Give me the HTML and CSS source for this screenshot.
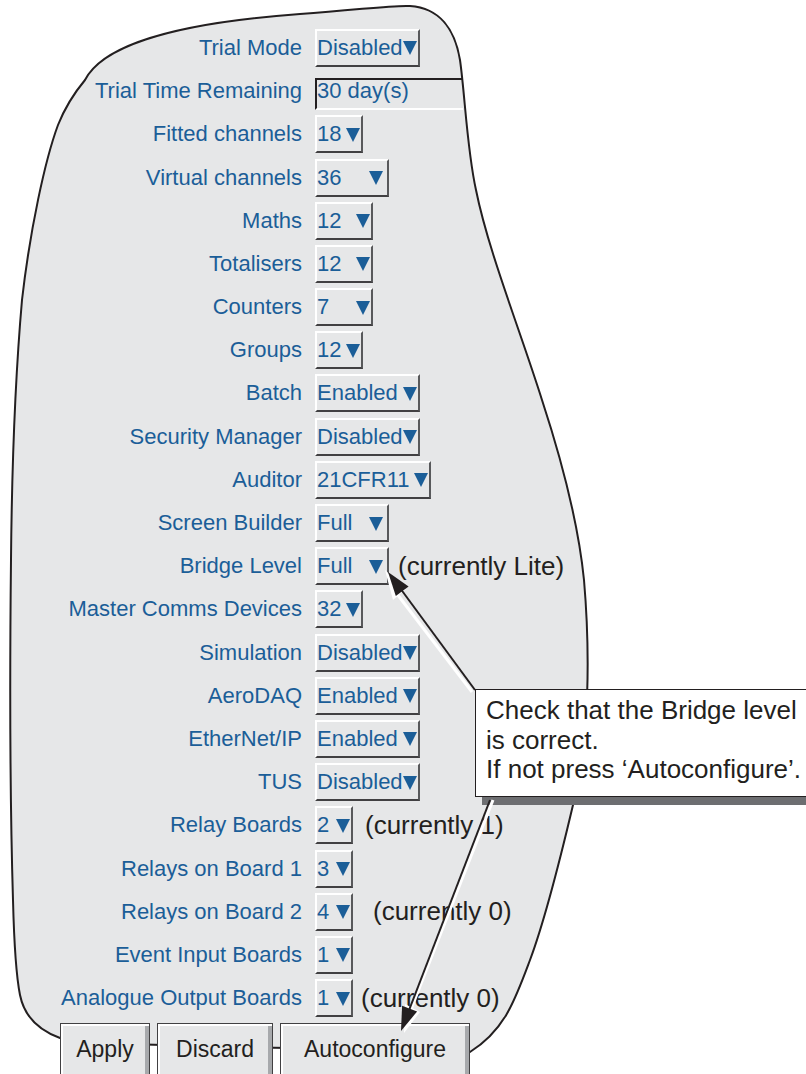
FILE: index.html
```html
<!DOCTYPE html>
<html lang="en">
<head>
    <meta charset="UTF-8">
    <meta name="viewport" content="width=device-width, initial-scale=1.0">
    <title>Options</title>
    <link rel="stylesheet" href="styles.css">
</head>
<body>
<div class="screen">

    <!-- panel outline, hand-drawn shape -->
    <svg class="outline" width="806" height="1074" viewBox="0 0 806 1074">
        <path d="M85,80 C100,50 160,24 300,14 C360,10 390,5 410,6 C440,8 455,30 460,60
                 C465,95 467,150 476,190 C488,250 520,330 542,400 C560,455 578,520 584,580
                 C590,650 590,740 573,805 C560,860 545,920 530,960 C515,1000 505,1030 470,1052
                 C350,1049 200,1047 100,1043 C80,1042 70,1040 60,1038
                 C38,1030 24,1015 20,995 C16,975 14,940 13,900
                 C10,800 10,650 11,560 C12,450 15,380 22,300 C30,230 45,160 58,125 C66,105 75,92 85,80 Z"
              fill="#e6e7e8" stroke="#231f20" stroke-width="2"/>
    </svg>

    <div class="form">
        <div class="row"><span class="label">Trial Mode</span><span class="pick w105">Disabled<i class="tri"></i></span></div>
        <div class="row"><span class="label">Trial Time Remaining</span><span class="field">30 day(s)</span></div>
        <div class="row"><span class="label">Fitted channels</span><span class="pick w48">18<i class="tri"></i></span></div>
        <div class="row"><span class="label">Virtual channels</span><span class="pick w74 pad4">36<i class="tri"></i></span></div>
        <div class="row"><span class="label">Maths</span><span class="pick w58">12<i class="tri"></i></span></div>
        <div class="row"><span class="label">Totalisers</span><span class="pick w58">12<i class="tri"></i></span></div>
        <div class="row"><span class="label">Counters</span><span class="pick w58">7<i class="tri"></i></span></div>
        <div class="row"><span class="label">Groups</span><span class="pick w48">12<i class="tri"></i></span></div>
        <div class="row"><span class="label">Batch</span><span class="pick w105">Enabled<i class="tri"></i></span></div>
        <div class="row"><span class="label">Security Manager</span><span class="pick w105">Disabled<i class="tri"></i></span></div>
        <div class="row"><span class="label">Auditor</span><span class="pick w116">21CFR11<i class="tri"></i></span></div>
        <div class="row"><span class="label">Screen Builder</span><span class="pick w74 pad4">Full<i class="tri"></i></span></div>
        <div class="row"><span class="label">Bridge Level</span><span class="pick w74 pad4">Full<i class="tri"></i></span><span class="note gap9">(currently Lite)</span></div>
        <div class="row"><span class="label">Master Comms Devices</span><span class="pick w48">32<i class="tri"></i></span></div>
        <div class="row"><span class="label">Simulation</span><span class="pick w105">Disabled<i class="tri"></i></span></div>
        <div class="row"><span class="label">AeroDAQ</span><span class="pick w105">Enabled<i class="tri"></i></span></div>
        <div class="row"><span class="label">EtherNet/IP</span><span class="pick w105">Enabled<i class="tri"></i></span></div>
        <div class="row"><span class="label">TUS</span><span class="pick w105">Disabled<i class="tri"></i></span></div>
        <div class="row"><span class="label">Relay Boards</span><span class="pick w38">2<i class="tri"></i></span><span class="note gap12">(currently 1)</span></div>
        <div class="row"><span class="label">Relays on Board 1</span><span class="pick w38">3<i class="tri"></i></span></div>
        <div class="row"><span class="label">Relays on Board 2</span><span class="pick w38">4<i class="tri"></i></span><span class="note gap20">(currently 0)</span></div>
        <div class="row"><span class="label">Event Input Boards</span><span class="pick w38">1<i class="tri"></i></span></div>
        <div class="row"><span class="label">Analogue Output Boards</span><span class="pick w38">1<i class="tri"></i></span><span class="note gap8">(currently 0)</span></div>
    </div>

    <div class="buttons">
        <button class="btn apply">Apply</button>
        <button class="btn discard">Discard</button>
        <button class="btn auto">Autoconfigure</button>
    </div>

    <div class="callout">Check that the Bridge level<br>is correct.<br>If not press ‘Autoconfigure’.</div>

    <!-- pointer arrows from the callout -->
    <svg class="arrows" width="806" height="1074" viewBox="0 0 806 1074">
        <line x1="472" y1="692" x2="394" y2="590" stroke="#fff" stroke-width="3"/>
        <polygon points="385,570 406,589 393,600" fill="#fff"/>
        <line x1="475" y1="690" x2="400" y2="588" stroke="#231f20" stroke-width="2"/>
        <polygon points="388,572 408.6,586.6 395.8,596" fill="#231f20"/>

        <line x1="493" y1="800" x2="406" y2="1022" stroke="#fff" stroke-width="3"/>
        <polygon points="404,1033 420,1012 405,1004" fill="#fff"/>
        <line x1="490" y1="800" x2="406" y2="1018" stroke="#231f20" stroke-width="2"/>
        <polygon points="401,1031 417.1,1011.5 402.1,1005.7" fill="#231f20"/>
    </svg>
</div>
</body>
</html>
```

FILE: styles.css
```css
        body {
            margin: 0;
            background-color: white;
            font-family: "Liberation Sans", Arial, sans-serif;
        }
        .screen {
            position: relative;
            width: 806px;
            height: 1074px;
            overflow: hidden;
        }
        .outline {
            position: absolute;
            left: 0;
            top: 0;
        }
        .arrows {
            position: absolute;
            left: 0;
            top: 0;
            z-index: 3;
        }

        /* form rows */
        .form {
            position: relative;
            padding-top: 26.4px;
        }
        .row {
            display: flex;
            align-items: center;
            height: 43.2px;
            font-size: 22px;
            color: #1b5e98;
        }
        .label {
            width: 302px;
            text-align: right;
            margin-right: 13px;
            white-space: nowrap;
        }
        .pick {
            box-sizing: border-box;
            height: 38px;
            display: flex;
            align-items: center;
            justify-content: space-between;
            padding-right: 1px;
            border-top: 2px solid #fff;
            border-left: 2px solid #fff;
            border-right: 2px solid #58595b;
            border-bottom: 2px solid #414042;
            white-space: nowrap;
        }
        .pad4 { padding-right: 4px; }
        .w38 { width: 38px; }
        .w48 { width: 48px; }
        .w58 { width: 58px; }
        .w74 { width: 74px; }
        .w105 { width: 105px; }
        .w116 { width: 116px; }

        .tri {
            width: 0;
            height: 0;
            border-left: 7px solid transparent;
            border-right: 7px solid transparent;
            border-top: 14px solid #1b5e98;
            margin-top: 1px;
        }
        .field {
            box-sizing: border-box;
            width: 148px;
            height: 32px;
            margin-top: 6px;
            padding-bottom: 6px;
            display: flex;
            align-items: center;
            border-top: 2px solid #231f20;
            border-left: 2px solid #231f20;
            border-bottom: 2px solid #fff;
        }
        .note {
            font-size: 26px;
            color: #231f20;
            white-space: nowrap;
        }
        .gap8 { margin-left: 8px; }
        .gap9 { margin-left: 9px; }
        .gap12 { margin-left: 12px; }
        .gap20 { margin-left: 20px; }

        /* bottom buttons */
        .buttons {
            position: relative;
            display: flex;
            gap: 7px;
            padding-left: 60px;
            margin-top: 3px;
        }
        .btn {
            box-sizing: border-box;
            height: 62px;
            padding: 0 0 8px 0;
            font-family: "Liberation Sans", Arial, sans-serif;
            font-size: 23px;
            color: #231f20;
            background-color: #e6e7e8;
            border: 1px solid #414042;
            border-radius: 0;
            box-shadow: inset 2px 2px 0 #fff, inset -4px -4px 0 #a7a9ac;
        }
        .apply { width: 90px; }
        .discard { width: 116px; }
        .auto { width: 190px; }

        /* note box */
        .callout {
            position: absolute;
            left: 475px;
            top: 689px;
            width: 360px;
            z-index: 2;
            padding: 6px 10px 11px 10px;
            background-color: white;
            border: 1px solid #231f20;
            box-shadow: 7px 8px 0 #6d6e71;
            font-size: 26px;
            line-height: 29.5px;
            color: #231f20;
            white-space: nowrap;
        }
```
